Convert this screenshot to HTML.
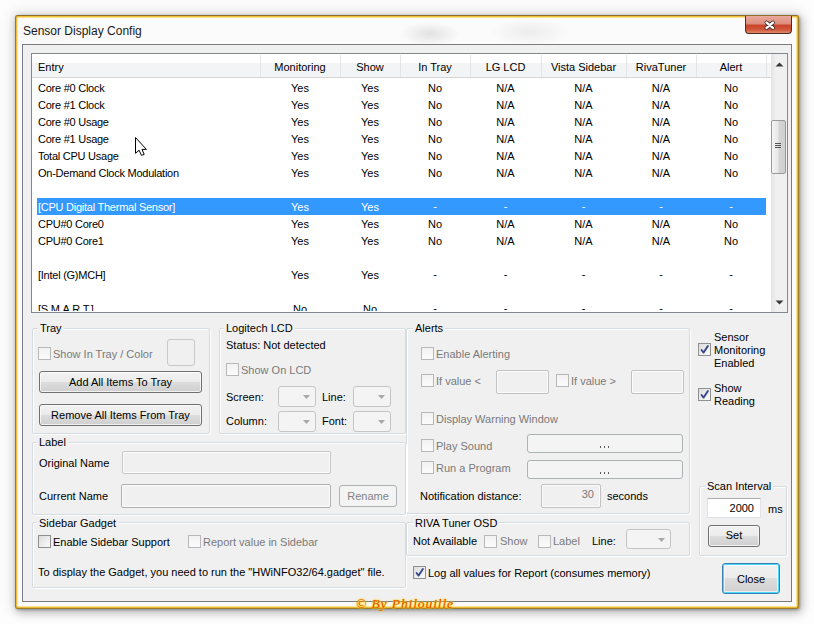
<!DOCTYPE html><html><head><meta charset="utf-8"><style>
html,body{margin:0;padding:0;width:814px;height:624px;overflow:hidden;background:#fdfdfd;font-family:'Liberation Sans',sans-serif;}
.a{position:absolute;box-sizing:content-box}
.t{position:absolute;white-space:nowrap;font-family:'Liberation Sans',sans-serif;}
.cb{position:absolute;width:11px;height:11px;border:1px solid #8f8f8f;background:linear-gradient(135deg,#dcdcdc,#fbfbfb)}
.cb.dis{border-color:#b8b8b8;background:linear-gradient(180deg,#f2f2f2,#fbfbfb)}
.btn{border:1px solid #707070;border-radius:3px;background:linear-gradient(180deg,#f2f2f2 0%,#ebebeb 50%,#dddddd 50%,#cfcfcf 100%);box-shadow:inset 0 0 0 1px rgba(255,255,255,0.7)}
.bdis{border-color:#adb2b5;background:#f4f4f4;box-shadow:none}
.bdef{border-color:#3c7fb1;box-shadow:inset 0 0 0 1px #48d8fb, inset 0 0 0 2px rgba(255,255,255,0.6)}
.grp{border:1px solid #d5dce1;border-radius:2px;box-shadow:inset 1px 1px 0 #fff, 1px 1px 0 #fff}
</style></head><body>
<div class="a" style="left:15px;top:15px;width:778px;height:588px;border:3px solid #f3c94f;border-color:#efbf3f #e9b83a #e9b83a #efbf3f;border-radius:3px;background:#fbfbfb;box-shadow:1px 1px 3px rgba(0,0,0,0.30),2px 3px 8px 1px rgba(0,0,0,0.20),0 0 14px 3px rgba(0,0,0,0.10)"></div>
<div class="a" style="left:15px;top:15px;width:782px;height:592px;border:1px solid #9a7a30;border-color:#8d6d2a #a07c2a #a07c2a #9a7a30;border-radius:3px"></div>
<div class="a" style="left:17px;top:17px;width:778px;height:588px;border:1px solid #fbe48f;border-radius:1px"></div>
<div class="a" style="left:380px;top:18px;width:200px;height:26px;background:radial-gradient(ellipse 30px 12px at 50px 16px,rgba(0,0,0,0.10),rgba(0,0,0,0) 100%),radial-gradient(ellipse 40px 14px at 150px 14px,rgba(0,0,0,0.06),rgba(0,0,0,0) 100%)"></div>
<div class="a" style="left:18px;top:18px;width:100px;height:26px;background:radial-gradient(ellipse 50px 14px at 30px 14px,rgba(0,0,0,0.03),rgba(0,0,0,0) 100%)"></div>
<div class="t" style="left:23px;top:24px;font-size:12px;line-height:14px;color:#1a1a1a;">Sensor Display Config</div>
<div class="a" style="left:745px;top:16px;width:45px;height:17px;border:1px solid #4d2a25;border-top:none;border-radius:0 0 4px 4px;background:linear-gradient(180deg,#e9a99c 0%,#df8e7e 45%,#c9452c 55%,#d0573a 80%,#e28b6a 100%)"></div>
<svg class="a" style="left:762px;top:18px" width="16" height="14"><path d="M4.6 4.6 L10.9 9.9 M10.9 4.6 L4.6 9.9" stroke="#3a2a28" stroke-width="4" stroke-linecap="round"/><path d="M4.6 4.6 L10.9 9.9 M10.9 4.6 L4.6 9.9" stroke="#fff" stroke-width="2.5" stroke-linecap="round"/></svg>
<div class="a" style="left:22px;top:44px;width:768px;height:556px;border:1px solid #7b7b7b;background:#f0f0f0"></div>
<div class="a" style="left:31px;top:53px;width:755px;height:258px;border:1px solid #828790;background:#fff;overflow:hidden"></div>
<div class="a" style="left:32px;top:54px;width:739px;height:23px;background:linear-gradient(180deg,#ffffff 0%,#ffffff 40%,#f3f4f6 40%,#f3f4f6 100%);border-bottom:1px solid #d5d5d5"></div>
<div class="t" style="left:38px;top:61px;font-size:11px;line-height:13px;color:#000;">Entry</div>
<div class="a" style="left:260px;top:55px;width:1px;height:22px;background:#e3e4e6"></div>
<div class="t" style="left:260px;top:61px;font-size:11px;line-height:13px;color:#000;width:80px;text-align:center;">Monitoring</div>
<div class="a" style="left:340px;top:55px;width:1px;height:22px;background:#e3e4e6"></div>
<div class="t" style="left:340px;top:61px;font-size:11px;line-height:13px;color:#000;width:60px;text-align:center;">Show</div>
<div class="a" style="left:400px;top:55px;width:1px;height:22px;background:#e3e4e6"></div>
<div class="t" style="left:400px;top:61px;font-size:11px;line-height:13px;color:#000;width:70px;text-align:center;">In Tray</div>
<div class="a" style="left:470px;top:55px;width:1px;height:22px;background:#e3e4e6"></div>
<div class="t" style="left:470px;top:61px;font-size:11px;line-height:13px;color:#000;width:71px;text-align:center;">LG LCD</div>
<div class="a" style="left:541px;top:55px;width:1px;height:22px;background:#e3e4e6"></div>
<div class="t" style="left:541px;top:61px;font-size:11px;line-height:13px;color:#000;width:85px;text-align:center;">Vista Sidebar</div>
<div class="a" style="left:626px;top:55px;width:1px;height:22px;background:#e3e4e6"></div>
<div class="t" style="left:626px;top:61px;font-size:11px;line-height:13px;color:#000;width:70px;text-align:center;">RivaTuner</div>
<div class="a" style="left:696px;top:55px;width:1px;height:22px;background:#e3e4e6"></div>
<div class="t" style="left:696px;top:61px;font-size:11px;line-height:13px;color:#000;width:70px;text-align:center;">Alert</div>
<div class="a" style="left:766px;top:55px;width:1px;height:22px;background:#e3e4e6"></div>
<div class="a" style="left:32px;top:78px;width:739px;height:233px;overflow:hidden">
<div class="t" style="left:6px;top:4px;font-size:11px;line-height:13px;color:#000;letter-spacing:-0.25px;">Core #0 Clock</div>
<div class="t" style="left:228px;top:4px;font-size:11px;line-height:13px;color:#000;width:80px;text-align:center;">Yes</div>
<div class="t" style="left:308px;top:4px;font-size:11px;line-height:13px;color:#000;width:60px;text-align:center;">Yes</div>
<div class="t" style="left:368px;top:4px;font-size:11px;line-height:13px;color:#000;width:70px;text-align:center;">No</div>
<div class="t" style="left:438px;top:4px;font-size:11px;line-height:13px;color:#000;width:71px;text-align:center;">N/A</div>
<div class="t" style="left:509px;top:4px;font-size:11px;line-height:13px;color:#000;width:85px;text-align:center;">N/A</div>
<div class="t" style="left:594px;top:4px;font-size:11px;line-height:13px;color:#000;width:70px;text-align:center;">N/A</div>
<div class="t" style="left:664px;top:4px;font-size:11px;line-height:13px;color:#000;width:70px;text-align:center;">No</div>
<div class="t" style="left:6px;top:21px;font-size:11px;line-height:13px;color:#000;letter-spacing:-0.25px;">Core #1 Clock</div>
<div class="t" style="left:228px;top:21px;font-size:11px;line-height:13px;color:#000;width:80px;text-align:center;">Yes</div>
<div class="t" style="left:308px;top:21px;font-size:11px;line-height:13px;color:#000;width:60px;text-align:center;">Yes</div>
<div class="t" style="left:368px;top:21px;font-size:11px;line-height:13px;color:#000;width:70px;text-align:center;">No</div>
<div class="t" style="left:438px;top:21px;font-size:11px;line-height:13px;color:#000;width:71px;text-align:center;">N/A</div>
<div class="t" style="left:509px;top:21px;font-size:11px;line-height:13px;color:#000;width:85px;text-align:center;">N/A</div>
<div class="t" style="left:594px;top:21px;font-size:11px;line-height:13px;color:#000;width:70px;text-align:center;">N/A</div>
<div class="t" style="left:664px;top:21px;font-size:11px;line-height:13px;color:#000;width:70px;text-align:center;">No</div>
<div class="t" style="left:6px;top:38px;font-size:11px;line-height:13px;color:#000;letter-spacing:-0.25px;">Core #0 Usage</div>
<div class="t" style="left:228px;top:38px;font-size:11px;line-height:13px;color:#000;width:80px;text-align:center;">Yes</div>
<div class="t" style="left:308px;top:38px;font-size:11px;line-height:13px;color:#000;width:60px;text-align:center;">Yes</div>
<div class="t" style="left:368px;top:38px;font-size:11px;line-height:13px;color:#000;width:70px;text-align:center;">No</div>
<div class="t" style="left:438px;top:38px;font-size:11px;line-height:13px;color:#000;width:71px;text-align:center;">N/A</div>
<div class="t" style="left:509px;top:38px;font-size:11px;line-height:13px;color:#000;width:85px;text-align:center;">N/A</div>
<div class="t" style="left:594px;top:38px;font-size:11px;line-height:13px;color:#000;width:70px;text-align:center;">N/A</div>
<div class="t" style="left:664px;top:38px;font-size:11px;line-height:13px;color:#000;width:70px;text-align:center;">No</div>
<div class="t" style="left:6px;top:55px;font-size:11px;line-height:13px;color:#000;letter-spacing:-0.25px;">Core #1 Usage</div>
<div class="t" style="left:228px;top:55px;font-size:11px;line-height:13px;color:#000;width:80px;text-align:center;">Yes</div>
<div class="t" style="left:308px;top:55px;font-size:11px;line-height:13px;color:#000;width:60px;text-align:center;">Yes</div>
<div class="t" style="left:368px;top:55px;font-size:11px;line-height:13px;color:#000;width:70px;text-align:center;">No</div>
<div class="t" style="left:438px;top:55px;font-size:11px;line-height:13px;color:#000;width:71px;text-align:center;">N/A</div>
<div class="t" style="left:509px;top:55px;font-size:11px;line-height:13px;color:#000;width:85px;text-align:center;">N/A</div>
<div class="t" style="left:594px;top:55px;font-size:11px;line-height:13px;color:#000;width:70px;text-align:center;">N/A</div>
<div class="t" style="left:664px;top:55px;font-size:11px;line-height:13px;color:#000;width:70px;text-align:center;">No</div>
<div class="t" style="left:6px;top:72px;font-size:11px;line-height:13px;color:#000;letter-spacing:-0.25px;">Total CPU Usage</div>
<div class="t" style="left:228px;top:72px;font-size:11px;line-height:13px;color:#000;width:80px;text-align:center;">Yes</div>
<div class="t" style="left:308px;top:72px;font-size:11px;line-height:13px;color:#000;width:60px;text-align:center;">Yes</div>
<div class="t" style="left:368px;top:72px;font-size:11px;line-height:13px;color:#000;width:70px;text-align:center;">No</div>
<div class="t" style="left:438px;top:72px;font-size:11px;line-height:13px;color:#000;width:71px;text-align:center;">N/A</div>
<div class="t" style="left:509px;top:72px;font-size:11px;line-height:13px;color:#000;width:85px;text-align:center;">N/A</div>
<div class="t" style="left:594px;top:72px;font-size:11px;line-height:13px;color:#000;width:70px;text-align:center;">N/A</div>
<div class="t" style="left:664px;top:72px;font-size:11px;line-height:13px;color:#000;width:70px;text-align:center;">No</div>
<div class="t" style="left:6px;top:89px;font-size:11px;line-height:13px;color:#000;letter-spacing:-0.25px;">On-Demand Clock Modulation</div>
<div class="t" style="left:228px;top:89px;font-size:11px;line-height:13px;color:#000;width:80px;text-align:center;">Yes</div>
<div class="t" style="left:308px;top:89px;font-size:11px;line-height:13px;color:#000;width:60px;text-align:center;">Yes</div>
<div class="t" style="left:368px;top:89px;font-size:11px;line-height:13px;color:#000;width:70px;text-align:center;">No</div>
<div class="t" style="left:438px;top:89px;font-size:11px;line-height:13px;color:#000;width:71px;text-align:center;">N/A</div>
<div class="t" style="left:509px;top:89px;font-size:11px;line-height:13px;color:#000;width:85px;text-align:center;">N/A</div>
<div class="t" style="left:594px;top:89px;font-size:11px;line-height:13px;color:#000;width:70px;text-align:center;">N/A</div>
<div class="t" style="left:664px;top:89px;font-size:11px;line-height:13px;color:#000;width:70px;text-align:center;">No</div>
<div class="a" style="left:5px;top:120px;width:729px;height:17px;background:#3399ff"></div>
<div class="t" style="left:6px;top:123px;font-size:11px;line-height:13px;color:#fff;letter-spacing:-0.25px;">[CPU Digital Thermal Sensor]</div>
<div class="t" style="left:228px;top:123px;font-size:11px;line-height:13px;color:#fff;width:80px;text-align:center;">Yes</div>
<div class="t" style="left:308px;top:123px;font-size:11px;line-height:13px;color:#fff;width:60px;text-align:center;">Yes</div>
<div class="t" style="left:368px;top:122px;font-size:11px;line-height:13px;color:#fff;width:70px;text-align:center;">-</div>
<div class="t" style="left:438px;top:122px;font-size:11px;line-height:13px;color:#fff;width:71px;text-align:center;">-</div>
<div class="t" style="left:509px;top:122px;font-size:11px;line-height:13px;color:#fff;width:85px;text-align:center;">-</div>
<div class="t" style="left:594px;top:122px;font-size:11px;line-height:13px;color:#fff;width:70px;text-align:center;">-</div>
<div class="t" style="left:664px;top:122px;font-size:11px;line-height:13px;color:#fff;width:70px;text-align:center;">-</div>
<div class="t" style="left:6px;top:140px;font-size:11px;line-height:13px;color:#000;letter-spacing:-0.25px;">CPU#0 Core0</div>
<div class="t" style="left:228px;top:140px;font-size:11px;line-height:13px;color:#000;width:80px;text-align:center;">Yes</div>
<div class="t" style="left:308px;top:140px;font-size:11px;line-height:13px;color:#000;width:60px;text-align:center;">Yes</div>
<div class="t" style="left:368px;top:140px;font-size:11px;line-height:13px;color:#000;width:70px;text-align:center;">No</div>
<div class="t" style="left:438px;top:140px;font-size:11px;line-height:13px;color:#000;width:71px;text-align:center;">N/A</div>
<div class="t" style="left:509px;top:140px;font-size:11px;line-height:13px;color:#000;width:85px;text-align:center;">N/A</div>
<div class="t" style="left:594px;top:140px;font-size:11px;line-height:13px;color:#000;width:70px;text-align:center;">N/A</div>
<div class="t" style="left:664px;top:140px;font-size:11px;line-height:13px;color:#000;width:70px;text-align:center;">No</div>
<div class="t" style="left:6px;top:157px;font-size:11px;line-height:13px;color:#000;letter-spacing:-0.25px;">CPU#0 Core1</div>
<div class="t" style="left:228px;top:157px;font-size:11px;line-height:13px;color:#000;width:80px;text-align:center;">Yes</div>
<div class="t" style="left:308px;top:157px;font-size:11px;line-height:13px;color:#000;width:60px;text-align:center;">Yes</div>
<div class="t" style="left:368px;top:157px;font-size:11px;line-height:13px;color:#000;width:70px;text-align:center;">No</div>
<div class="t" style="left:438px;top:157px;font-size:11px;line-height:13px;color:#000;width:71px;text-align:center;">N/A</div>
<div class="t" style="left:509px;top:157px;font-size:11px;line-height:13px;color:#000;width:85px;text-align:center;">N/A</div>
<div class="t" style="left:594px;top:157px;font-size:11px;line-height:13px;color:#000;width:70px;text-align:center;">N/A</div>
<div class="t" style="left:664px;top:157px;font-size:11px;line-height:13px;color:#000;width:70px;text-align:center;">No</div>
<div class="t" style="left:6px;top:191px;font-size:11px;line-height:13px;color:#000;letter-spacing:-0.25px;">[Intel (G)MCH]</div>
<div class="t" style="left:228px;top:191px;font-size:11px;line-height:13px;color:#000;width:80px;text-align:center;">Yes</div>
<div class="t" style="left:308px;top:191px;font-size:11px;line-height:13px;color:#000;width:60px;text-align:center;">Yes</div>
<div class="t" style="left:368px;top:190px;font-size:11px;line-height:13px;color:#000;width:70px;text-align:center;">-</div>
<div class="t" style="left:438px;top:190px;font-size:11px;line-height:13px;color:#000;width:71px;text-align:center;">-</div>
<div class="t" style="left:509px;top:190px;font-size:11px;line-height:13px;color:#000;width:85px;text-align:center;">-</div>
<div class="t" style="left:594px;top:190px;font-size:11px;line-height:13px;color:#000;width:70px;text-align:center;">-</div>
<div class="t" style="left:664px;top:190px;font-size:11px;line-height:13px;color:#000;width:70px;text-align:center;">-</div>
<div class="t" style="left:6px;top:225px;font-size:11px;line-height:13px;color:#000;letter-spacing:-0.25px;">[S.M.A.R.T.]</div>
<div class="t" style="left:228px;top:225px;font-size:11px;line-height:13px;color:#000;width:80px;text-align:center;">No</div>
<div class="t" style="left:308px;top:225px;font-size:11px;line-height:13px;color:#000;width:60px;text-align:center;">No</div>
<div class="t" style="left:368px;top:224px;font-size:11px;line-height:13px;color:#000;width:70px;text-align:center;">-</div>
<div class="t" style="left:438px;top:224px;font-size:11px;line-height:13px;color:#000;width:71px;text-align:center;">-</div>
<div class="t" style="left:509px;top:224px;font-size:11px;line-height:13px;color:#000;width:85px;text-align:center;">-</div>
<div class="t" style="left:594px;top:224px;font-size:11px;line-height:13px;color:#000;width:70px;text-align:center;">-</div>
<div class="t" style="left:664px;top:224px;font-size:11px;line-height:13px;color:#000;width:70px;text-align:center;">-</div>
</div>
<svg class="a" style="left:135px;top:137px" width="14" height="20"><path d="M0.5 0.5 L0.5 16.3 L4.1 13.2 L6.5 18.4 L9.2 17.4 L7 12.4 L11.4 12.4 Z" fill="#fff" stroke="#000" stroke-width="1" stroke-linejoin="miter"/></svg>
<div class="a" style="left:771px;top:54px;width:16px;height:258px;background:linear-gradient(90deg,#e3e3e3,#f0f0f0 30%,#f0f0f0)"></div>
<svg class="a" style="left:775px;top:62px" width="9" height="5"><path d="M0.5 4.5 L4.5 0.5 L8.5 4.5 Z" fill="#3a3a3a"/></svg>
<svg class="a" style="left:775px;top:300px" width="9" height="5"><path d="M0.5 0.5 L4.5 4.5 L8.5 0.5 Z" fill="#3a3a3a"/></svg>
<div class="a" style="left:771px;top:120px;width:13px;height:52px;border:1px solid #9a9a9a;border-radius:2px;background:linear-gradient(90deg,#f4f4f4,#e8e8e8 45%,#d4d4d4 55%,#cfcfcf)"></div>
<div class="a" style="left:775px;top:143px;width:6px;height:1px;background:#555"></div>
<div class="a" style="left:775px;top:145px;width:6px;height:1px;background:#555"></div>
<div class="a" style="left:775px;top:147px;width:6px;height:1px;background:#555"></div>
<div class="a grp" style="left:32px;top:328px;width:176px;height:104px"></div>
<div class="t" style="left:38px;top:322px;font-size:11px;line-height:13px;padding:0 2px;background:#f0f0f0;color:#000">Tray</div>
<div class="cb dis" style="left:38px;top:347px"></div>
<div class="t" style="left:53px;top:348px;font-size:11px;line-height:13px;color:#7a7a7a;">Show In Tray / Color</div>
<div class="a" style="left:167px;top:339px;width:26px;height:25px;border:1px solid #c9c9c9;border-radius:3px;background:#f0f0f0"></div>
<div class="a btn" style="left:39px;top:371px;width:161px;height:20px"></div>
<div class="t" style="left:39px;top:376px;font-size:11px;line-height:13px;color:#000;width:163px;text-align:center;">Add All Items To Tray</div>
<div class="a btn" style="left:39px;top:404px;width:161px;height:20px"></div>
<div class="t" style="left:39px;top:409px;font-size:11px;line-height:13px;color:#000;width:163px;text-align:center;">Remove All Items From Tray</div>
<div class="a grp" style="left:219px;top:328px;width:185px;height:104px"></div>
<div class="t" style="left:224px;top:322px;font-size:11px;line-height:13px;padding:0 2px;background:#f0f0f0;color:#000">Logitech LCD</div>
<div class="t" style="left:226px;top:339px;font-size:11px;line-height:13px;color:#000;">Status: Not detected</div>
<div class="cb dis" style="left:226px;top:363px"></div>
<div class="t" style="left:241px;top:364px;font-size:11px;line-height:13px;color:#7a7a7a;">Show On LCD</div>
<div class="t" style="left:226px;top:391px;font-size:11px;line-height:13px;color:#000;">Screen:</div>
<div class="a" style="left:278px;top:386px;width:36px;height:19px;border:1px solid #c5c5c5;border-radius:3px;background:#f4f4f4"></div>
<svg class="a" style="left:303px;top:395px" width="8" height="5"><path d="M0 0 L7 0 L3.5 4 Z" fill="#a8a8a8"/></svg>
<div class="t" style="left:322px;top:391px;font-size:11px;line-height:13px;color:#000;">Line:</div>
<div class="a" style="left:353px;top:386px;width:36px;height:19px;border:1px solid #c5c5c5;border-radius:3px;background:#f4f4f4"></div>
<svg class="a" style="left:378px;top:395px" width="8" height="5"><path d="M0 0 L7 0 L3.5 4 Z" fill="#a8a8a8"/></svg>
<div class="t" style="left:226px;top:415px;font-size:11px;line-height:13px;color:#000;">Column:</div>
<div class="a" style="left:278px;top:411px;width:36px;height:19px;border:1px solid #c5c5c5;border-radius:3px;background:#f4f4f4"></div>
<svg class="a" style="left:303px;top:420px" width="8" height="5"><path d="M0 0 L7 0 L3.5 4 Z" fill="#a8a8a8"/></svg>
<div class="t" style="left:322px;top:415px;font-size:11px;line-height:13px;color:#000;">Font:</div>
<div class="a" style="left:353px;top:411px;width:36px;height:19px;border:1px solid #c5c5c5;border-radius:3px;background:#f4f4f4"></div>
<svg class="a" style="left:378px;top:420px" width="8" height="5"><path d="M0 0 L7 0 L3.5 4 Z" fill="#a8a8a8"/></svg>
<div class="a grp" style="left:406px;top:328px;width:282px;height:184px"></div>
<div class="t" style="left:413px;top:322px;font-size:11px;line-height:13px;padding:0 2px;background:#f0f0f0;color:#000">Alerts</div>
<div class="cb dis" style="left:421px;top:347px"></div>
<div class="t" style="left:436px;top:348px;font-size:11px;line-height:13px;color:#7a7a7a;">Enable Alerting</div>
<div class="cb dis" style="left:421px;top:374px"></div>
<div class="t" style="left:436px;top:375px;font-size:11px;line-height:13px;color:#7a7a7a;">If value &lt;</div>
<div class="a" style="left:496px;top:370px;width:51px;height:22px;border:1px solid #c2c2c2;border-radius:2px;background:#f0f0f0;box-shadow:inset 0 0 0 1px #fbfbfb"></div>
<div class="cb dis" style="left:556px;top:374px"></div>
<div class="t" style="left:571px;top:375px;font-size:11px;line-height:13px;color:#7a7a7a;">If value &gt;</div>
<div class="a" style="left:631px;top:370px;width:51px;height:22px;border:1px solid #c2c2c2;border-radius:2px;background:#f0f0f0;box-shadow:inset 0 0 0 1px #fbfbfb"></div>
<div class="cb dis" style="left:421px;top:412px"></div>
<div class="t" style="left:436px;top:413px;font-size:11px;line-height:13px;color:#7a7a7a;">Display Warning Window</div>
<div class="cb dis" style="left:421px;top:439px"></div>
<div class="t" style="left:436px;top:440px;font-size:11px;line-height:13px;color:#7a7a7a;">Play Sound</div>
<div class="a btn bdis" style="left:527px;top:434px;width:154px;height:17px"></div>
<div class="t" style="left:527px;top:437px;font-size:11px;line-height:13px;color:#838383;width:156px;text-align:center;"></div>
<div class="a" style="left:600px;top:446px;width:1px;height:2px;background:#5f5f5f"></div>
<div class="a" style="left:604px;top:446px;width:1px;height:2px;background:#5f5f5f"></div>
<div class="a" style="left:608px;top:446px;width:1px;height:2px;background:#5f5f5f"></div>
<div class="cb dis" style="left:421px;top:461px"></div>
<div class="t" style="left:436px;top:462px;font-size:11px;line-height:13px;color:#7a7a7a;">Run a Program</div>
<div class="a btn bdis" style="left:527px;top:460px;width:154px;height:17px"></div>
<div class="t" style="left:527px;top:463px;font-size:11px;line-height:13px;color:#838383;width:156px;text-align:center;"></div>
<div class="a" style="left:600px;top:472px;width:1px;height:2px;background:#5f5f5f"></div>
<div class="a" style="left:604px;top:472px;width:1px;height:2px;background:#5f5f5f"></div>
<div class="a" style="left:608px;top:472px;width:1px;height:2px;background:#5f5f5f"></div>
<div class="t" style="left:420px;top:490px;font-size:11px;line-height:13px;color:#000;">Notification distance:</div>
<div class="a" style="left:541px;top:484px;width:58px;height:22px;border:1px solid #c2c2c2;border-radius:2px;background:#f0f0f0;box-shadow:inset 0 0 0 1px #fbfbfb"></div>
<div class="t" style="left:541px;top:488px;font-size:11px;line-height:13px;color:#7a7a7a;width:53px;text-align:right;">30</div>
<div class="t" style="left:607px;top:490px;font-size:11px;line-height:13px;color:#000;">seconds</div>
<div class="cb" style="left:698px;top:343px"><svg width="13" height="13" style="position:absolute;left:-1px;top:-1px"><path d="M3.6 7 L5.6 9.6 L9.9 3" stroke="#36488a" stroke-width="1.9" fill="none" stroke-linecap="round" stroke-linejoin="round"/></svg></div>
<div class="t" style="left:714px;top:331px;font-size:11px;line-height:13px;color:#000;">Sensor</div>
<div class="t" style="left:714px;top:344px;font-size:11px;line-height:13px;color:#000;">Monitoring</div>
<div class="t" style="left:714px;top:357px;font-size:11px;line-height:13px;color:#000;">Enabled</div>
<div class="cb" style="left:698px;top:388px"><svg width="13" height="13" style="position:absolute;left:-1px;top:-1px"><path d="M3.6 7 L5.6 9.6 L9.9 3" stroke="#36488a" stroke-width="1.9" fill="none" stroke-linecap="round" stroke-linejoin="round"/></svg></div>
<div class="t" style="left:714px;top:382px;font-size:11px;line-height:13px;color:#000;">Show</div>
<div class="t" style="left:714px;top:395px;font-size:11px;line-height:13px;color:#000;">Reading</div>
<div class="a grp" style="left:32px;top:442px;width:372px;height:71px"></div>
<div class="t" style="left:37px;top:436px;font-size:11px;line-height:13px;padding:0 2px;background:#f0f0f0;color:#000">Label</div>
<div class="t" style="left:39px;top:457px;font-size:11px;line-height:13px;color:#000;">Original Name</div>
<div class="a" style="left:122px;top:451px;width:207px;height:21px;border:1px solid #c8c8c8;border-radius:2px;background:#f0f0f0;box-shadow:inset 0 0 0 1px #fbfbfb"></div>
<div class="t" style="left:39px;top:490px;font-size:11px;line-height:13px;color:#000;">Current Name</div>
<div class="a" style="left:121px;top:484px;width:208px;height:22px;border:1px solid #b0b0b0;border-radius:2px;background:#f0f0f0;box-shadow:inset 0 0 0 1px #fbfbfb"></div>
<div class="a btn bdis" style="left:339px;top:485px;width:56px;height:20px"></div>
<div class="t" style="left:339px;top:490px;font-size:11px;line-height:13px;color:#838383;width:58px;text-align:center;">Rename</div>
<div class="a grp" style="left:32px;top:522px;width:372px;height:64px"></div>
<div class="t" style="left:37px;top:517px;font-size:11px;line-height:13px;padding:0 2px;background:#f0f0f0;color:#000">Sidebar Gadget</div>
<div class="cb" style="left:38px;top:535px"></div>
<div class="t" style="left:53px;top:536px;font-size:11px;line-height:13px;color:#000;">Enable Sidebar Support</div>
<div class="cb dis" style="left:188px;top:535px"></div>
<div class="t" style="left:203px;top:536px;font-size:11px;line-height:13px;color:#7a7a7a;">Report value in Sidebar</div>
<div class="t" style="left:38px;top:566px;font-size:11px;line-height:13px;color:#000;">To display the Gadget, you need to run the "HWiNFO32/64.gadget" file.</div>
<div class="a grp" style="left:406px;top:522px;width:282px;height:32px"></div>
<div class="t" style="left:413px;top:517px;font-size:11px;line-height:13px;padding:0 2px;background:#f0f0f0;color:#000">RIVA Tuner OSD</div>
<div class="t" style="left:413px;top:535px;font-size:11px;line-height:13px;color:#000;">Not Available</div>
<div class="cb dis" style="left:484px;top:535px"></div>
<div class="t" style="left:500px;top:535px;font-size:11px;line-height:13px;color:#7a7a7a;">Show</div>
<div class="cb dis" style="left:538px;top:535px"></div>
<div class="t" style="left:553px;top:535px;font-size:11px;line-height:13px;color:#7a7a7a;">Label</div>
<div class="t" style="left:592px;top:535px;font-size:11px;line-height:13px;color:#000;">Line:</div>
<div class="a" style="left:626px;top:529px;width:43px;height:18px;border:1px solid #c5c5c5;border-radius:3px;background:#f4f4f4"></div>
<svg class="a" style="left:658px;top:538px" width="8" height="5"><path d="M0 0 L7 0 L3.5 4 Z" fill="#a8a8a8"/></svg>
<div class="a grp" style="left:699px;top:486px;width:86px;height:68px"></div>
<div class="t" style="left:705px;top:480px;font-size:11px;line-height:13px;padding:0 2px;background:#f0f0f0;color:#000">Scan Interval</div>
<div class="a" style="left:707px;top:498px;width:52px;height:18px;border:1px solid #dbdfe6;border-top-color:#abadb3;border-left-color:#e2e3ea;border-right-color:#e2e3ea;background:#fff"></div>
<div class="t" style="left:707px;top:502px;font-size:11px;line-height:13px;color:#000;width:47px;text-align:right;">2000</div>
<div class="t" style="left:768px;top:503px;font-size:11px;line-height:13px;color:#000;">ms</div>
<div class="a btn" style="left:708px;top:525px;width:50px;height:20px"></div>
<div class="t" style="left:708px;top:529px;font-size:11px;line-height:13px;color:#000;width:52px;text-align:center;">Set</div>
<div class="cb" style="left:413px;top:566px"><svg width="13" height="13" style="position:absolute;left:-1px;top:-1px"><path d="M3.6 7 L5.6 9.6 L9.9 3" stroke="#36488a" stroke-width="1.9" fill="none" stroke-linecap="round" stroke-linejoin="round"/></svg></div>
<div class="t" style="left:428px;top:567px;font-size:11px;line-height:13px;color:#000;">Log all values for Report (consumes memory)</div>
<div class="a btn bdef" style="left:722px;top:563px;width:56px;height:29px"></div>
<div class="t" style="left:722px;top:573px;font-size:11px;line-height:13px;color:#000;width:58px;text-align:center;">Close</div>
<div class="t" style="left:356px;top:596px;font-family:'Liberation Serif',serif;font-style:italic;font-size:13.5px;letter-spacing:0.9px;line-height:16px;color:#e45800;text-shadow:0 0 1px #ffc000,0 0 2px #ffc800,0 0 3px #ffd84a">&copy; By Philouille</div>
</body></html>
